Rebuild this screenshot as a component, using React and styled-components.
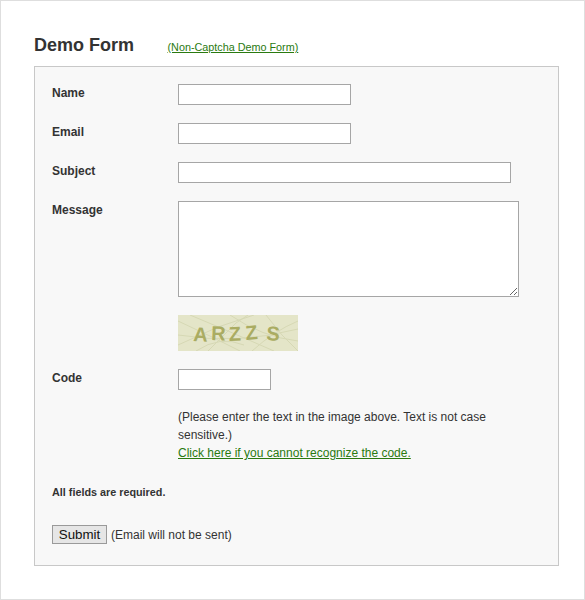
import React from 'react';
import styled, { createGlobalStyle } from 'styled-components';

const GlobalStyle = createGlobalStyle`
  html, body {
    margin: 0;
    padding: 0;
    background: #fff;
  }
  * {
    box-sizing: border-box;
  }
`;

const Page = styled.div`
  width: 585px;
  height: 600px;
  padding: 29px 25px 0 33px;
  border: 1px solid #dedede;
  font-family: "Liberation Sans", Arial, sans-serif;
  color: #333;
  overflow: hidden;
`;

const TitleRow = styled.div`
  display: flex;
  align-items: baseline;
  height: 36px;
`;

const PageTitle = styled.h1`
  margin: 0;
  width: 133.5px;
  font-size: 18px;
  line-height: 30px;
  font-weight: bold;
  color: #333;
`;

const SmallLink = styled.a`
  font-size: 10.8px;
  color: #2a7a10;
  text-decoration: underline;
`;

const Panel = styled.form`
  width: 525px;
  height: 500px;
  padding: 17px 17px 0;
  background: #f8f8f8;
  border: 1px solid #c8c8c8;
`;

const Row = styled.div`
  display: grid;
  grid-template-columns: 126px 1fr;
  margin-bottom: ${(p) => p.$gap ?? 18}px;
`;

const Label = styled.label`
  font-size: 12px;
  line-height: 18px;
  font-weight: bold;
  color: #333;
`;

const TextInput = styled.input`
  display: block;
  width: ${(p) => p.$width}px;
  height: 21px;
  padding: 1px 2px;
  background: #fff;
  border: 1px solid #a6a6a6;
  border-radius: 0;
  outline: none;
`;

const MessageBox = styled.textarea`
  display: block;
  width: 341px;
  height: 96px;
  padding: 2px;
  background: #fff;
  border: 1px solid #a6a6a6;
  border-radius: 0;
  outline: none;
`;

const CaptchaImage = styled.svg`
  display: block;
  width: 120px;
  height: 36px;
`;

const HelpText = styled.div`
  width: 340px;
  font-size: 12px;
  line-height: 18px;
  color: #333;
`;

const HelpLink = styled.a`
  color: #2a7a10;
  text-decoration: underline;
`;

const Required = styled.p`
  margin: 0 0 24px;
  font-size: 10.8px;
  line-height: 18px;
  font-weight: bold;
  color: #333;
`;

const SubmitRow = styled.div`
  display: flex;
  align-items: center;
  gap: 4px;
  font-size: 12px;
  color: #333;
`;

const SubmitButton = styled.button`
  width: 55px;
  height: 19px;
  padding: 0;
  font-family: "Liberation Sans", Arial, sans-serif;
  font-size: 13.33px;
  line-height: 15px;
  color: #111;
  background: #e6e6e6;
  border: 1px solid #9a9a9a;
  border-radius: 0;
`;

const captchaLines = [
  'M0 6 L34 22 L62 36', 'M12 0 L50 16 L96 36', 'M30 36 L58 8 L70 0',
  'M0 30 L40 12 L76 0', 'M52 0 Q84 22 120 26', 'M74 36 Q96 16 120 6',
  'M0 20 Q60 30 120 14', 'M88 0 L104 20 L120 36', 'M18 36 Q42 20 66 30',
];

const captchaLetters = [
  { ch: 'A', x: 15, y: 26, r: 3 },
  { ch: 'R', x: 33, y: 25, r: 2 },
  { ch: 'Z', x: 51, y: 26, r: -2 },
  { ch: 'Z', x: 68, y: 25, r: -5 },
  { ch: 'S', x: 88, y: 25, r: 4 },
];

const Captcha = () => (
  <CaptchaImage viewBox="0 0 120 36">
    <rect width="120" height="36" fill="#e4e5c8" />
    {captchaLines.map((d) => (
      <path key={d} d={d} fill="none" stroke="#d6d8b4" strokeWidth="1" />
    ))}
    {captchaLetters.map((l, i) => (
      <text
        key={i}
        x={l.x}
        y={l.y}
        transform={`rotate(${l.r} ${l.x} ${l.y})`}
        fontFamily="'Liberation Sans', Arial, sans-serif"
        fontSize="20"
        fontWeight="bold"
        fill="#aaac62"
      >
        {l.ch}
      </text>
    ))}
  </CaptchaImage>
);

const App = () => {
  return (
    <>
      <GlobalStyle />
      <Page>
        <TitleRow>
          <PageTitle>Demo Form</PageTitle>
          <SmallLink href="#">(Non-Captcha Demo Form)</SmallLink>
        </TitleRow>
        <Panel onSubmit={(e) => e.preventDefault()}>
          <Row>
            <Label>Name</Label>
            <TextInput $width={173} />
          </Row>
          <Row>
            <Label>Email</Label>
            <TextInput $width={173} />
          </Row>
          <Row>
            <Label>Subject</Label>
            <TextInput $width={333} />
          </Row>
          <Row>
            <Label>Message</Label>
            <MessageBox />
          </Row>
          <Row>
            <span />
            <Captcha />
          </Row>
          <Row>
            <Label>Code</Label>
            <TextInput $width={93} />
          </Row>
          <Row $gap={21}>
            <span />
            <HelpText>
              (Please enter the text in the image above. Text is not case sensitive.)
              <br />
              <HelpLink href="#">Click here if you cannot recognize the code.</HelpLink>
            </HelpText>
          </Row>
          <Required>All fields are required.</Required>
          <SubmitRow>
            <SubmitButton type="submit">Submit</SubmitButton>
            <span>(Email will not be sent)</span>
          </SubmitRow>
        </Panel>
      </Page>
    </>
  );
};

export default App;
